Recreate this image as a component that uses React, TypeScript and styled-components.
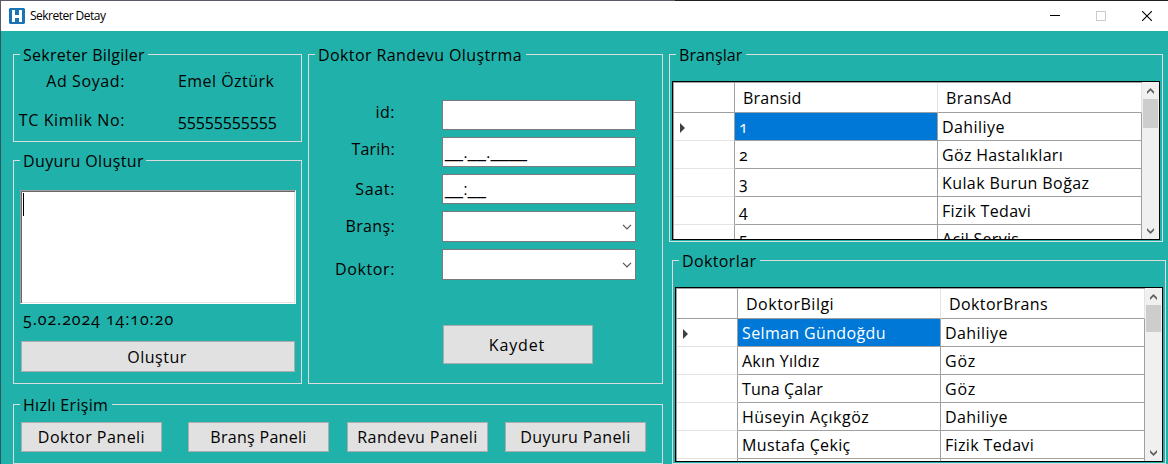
import React from 'react';
import styled, { createGlobalStyle } from 'styled-components';

const TEAL = '#20b2aa';

const GlobalStyle = createGlobalStyle`
  * { box-sizing: border-box; }
  body { margin: 0; background: ${TEAL}; overflow: hidden; }
`;

const Window = styled.div`
  width: 1168px;
  height: 464px;
  overflow: hidden;
  display: flex;
  flex-direction: column;
  background: linear-gradient(90deg, #5a5b64 675px, #221f22 675px);
  font: 16px/20px 'Open Sans', 'Noto Sans', sans-serif;
  font-variant-numeric: oldstyle-nums;
  color: #000;
`;

const TitleBar = styled.header`
  height: 30px;
  margin: 1px 0 0 1px;
  display: flex;
  align-items: center;
  background: #fff;
  padding-left: 8px;
  flex: none;
`;

const Title = styled.h1`
  margin: 0 auto 0 5px;
  font-size: 12px;
  font-weight: 400;
  line-height: 16px;
  letter-spacing: -0.52px;
`;

const WindowControls = styled.div`
  display: flex;
  margin-right: -2px;
`;

const WindowControl = styled.span`
  width: 46px;
  height: 30px;
  display: flex;
  align-items: center;
  justify-content: center;

  svg { display: block; }
`;

const Form = styled.main`
  flex: 1;
  display: flex;
  align-items: flex-start;
  gap: 6px;
  background: ${TEAL};
  border-left: 1px solid #2a5b5c;
  padding: 23px 0 0 12px;
`;

const LeftPane = styled.div`
  width: 650px;
  display: flex;
  flex-direction: column;
  gap: 20px;
`;

const TopRow = styled.div`
  display: flex;
  gap: 6px;
`;

const Stack = styled.div<{ $gap: number }>`
  display: flex;
  flex-direction: column;
  gap: ${p => p.$gap}px;
`;

const GroupFrame = styled.section<{ $w: number; $h: number; $indent?: number }>`
  width: ${p => p.$w}px;
  height: ${p => p.$h}px;
  margin-left: ${p => p.$indent ?? 0}px;
  border: 1px solid #dcdcdc;
  flex: none;
`;

const Legend = styled.h2<{ $w: number; $track: number }>`
  width: ${p => p.$w}px;
  height: 20px;
  margin: -10px 0 0 6px;
  padding-left: 3px;
  background: ${TEAL};
  font-size: 16px;
  font-weight: 400;
  white-space: nowrap;
  letter-spacing: ${p => p.$track}px;
`;

const Text = styled.span<{ $track?: number }>`
  letter-spacing: ${p => p.$track ?? 0.45}px;
  white-space: nowrap;
`;

const InfoGrid = styled.div`
  display: grid;
  grid-template-columns: 111px auto;
  column-gap: 53px;
  padding-top: 6px;
  row-gap: 19px;
`;

const InfoLabel = styled(Text)`
  justify-self: end;
`;

const NoticeBody = styled.div`
  padding: 19px 6px 0;
`;

const NoticeInput = styled.div`
  width: 276px;
  height: 114px;
  background: #fff;
  border: 1px solid;
  border-color: #a0a0a0 #fff #fff #a0a0a0;
  box-shadow: inset 1px 1px #696969, inset -1px -1px #e3e3e3;
  padding: 2px;
`;

const Caret = styled.div`
  width: 1px;
  height: 23px;
  background: #000;
`;

const Timestamp = styled.div`
  margin: 5px 0 12px 3px;
`;

const Button = styled.button<{ $w: number; $h: number; $track?: number }>`
  display: flex;
  align-items: center;
  justify-content: center;
  width: ${p => p.$w}px;
  height: ${p => p.$h}px;
  padding: 0;
  flex: none;
  border: 1px solid #adadad;
  border-radius: 0;
  background: #e1e1e1;
  color: #000;
  font: inherit;
  letter-spacing: ${p => p.$track ?? 0.45}px;
`;

const NoticeButton = styled(Button)`
  margin-left: 1px;
  padding-right: 2px;
`;

const FormRows = styled.div`
  display: flex;
  flex-direction: column;
  gap: 7px;
  padding-top: 35px;
`;

const FormRow = styled.div`
  display: flex;
  align-items: flex-start;
`;

const FieldLabel = styled.label<{ $drop: number; $track: number }>`
  width: 86px;
  margin: ${p => p.$drop}px 47px 0 0;
  text-align: right;
  letter-spacing: ${p => p.$track}px;
`;

const Field = styled.div<{ $h: number }>`
  width: 194px;
  height: ${p => p.$h}px;
  background: #fff;
  border: 1px solid #7a7a7a;
  display: flex;
  align-items: center;
  padding: 2px 3px 0 2px;
  font-family: 'Liberation Sans', sans-serif;
  letter-spacing: 0.2px;
`;

const ComboArrow = styled.svg`
  margin: 0 0 2px auto;
`;

const SaveButton = styled(Button)`
  margin: 45px 0 0 134px;
  padding-right: 2px;
`;

const QuickRow = styled.div`
  display: flex;
  padding: 7px 0 0 7px;
`;

const QuickButton = styled(Button)<{ $after: number }>`
  margin-right: ${p => p.$after}px;
`;

const GridFrame = styled.div<{ $h: number }>`
  width: 488px;
  height: ${p => p.$h}px;
  margin: 16px 0 0 2px;
  border: 1px solid #000;
  display: flex;
  background: #fff;
  overflow: hidden;
`;

const Sheet = styled.div`
  flex: 1;
  border-top: 1px solid #a0a0a0;
  border-left: 1px solid #a0a0a0;
  overflow: hidden;
`;

const SheetRow = styled.div<{ $head?: boolean }>`
  display: grid;
  grid-template-columns: 61px 203px 204px;
  height: ${p => (p.$head ? 30 : 28)}px;
`;

const RowHead = styled.div<{ $head?: boolean }>`
  display: flex;
  align-items: center;
  padding: 2px 0 0 6px;
  border-right: 1px solid #a0a0a0;
  border-bottom: 1px solid ${p => (p.$head ? '#a0a0a0' : '#e3e3e3')};
`;

const ColumnHead = styled.div<{ $track: number }>`
  display: flex;
  align-items: center;
  padding-left: 8px;
  border-right: 1px solid #e3e3e3;
  border-bottom: 1px solid #a0a0a0;
  letter-spacing: ${p => p.$track}px;
`;

const Cell = styled.div<{ $selected?: boolean; $track?: number }>`
  display: flex;
  align-items: center;
  padding-left: 4px;
  border-right: 1px solid #a0a0a0;
  border-bottom: 1px solid #a0a0a0;
  background: ${p => (p.$selected ? '#0078d7' : '#fff')};
  color: ${p => (p.$selected ? '#fff' : '#000')};
  white-space: nowrap;
  letter-spacing: ${p => p.$track ?? 0.42}px;
`;

const ScrollTrack = styled.div`
  width: 17px;
  display: flex;
  flex-direction: column;
  align-items: center;
  background: #f0f0f0;
`;

const ScrollArrow = styled.span<{ $push?: boolean }>`
  height: 17px;
  display: flex;
  align-items: center;
  margin-top: ${p => (p.$push ? 'auto' : 0)};
`;

const ScrollThumb = styled.div<{ $h: number }>`
  width: 15px;
  height: ${p => p.$h}px;
  background: #cdcdcd;
`;

type Entry = { text: string; track?: number };

const branches: [Entry, Entry][] = [
  [{ text: '1' }, { text: 'Dahiliye' }],
  [{ text: '2' }, { text: 'Göz Hastalıkları', track: 0.33 }],
  [{ text: '3' }, { text: 'Kulak Burun Boğaz', track: 0.4 }],
  [{ text: '4' }, { text: 'Fizik Tedavi', track: 0.35 }],
  [{ text: '5' }, { text: 'Acil Servis', track: 0.3 }],
];

const doctors: [Entry, Entry][] = [
  [{ text: 'Selman Gündoğdu', track: 0.36 }, { text: 'Dahiliye' }],
  [{ text: 'Akın Yıldız', track: 0.25 }, { text: 'Göz', track: 0.8 }],
  [{ text: 'Tuna Çalar', track: 0.1 }, { text: 'Göz', track: 0.8 }],
  [{ text: 'Hüseyin Açıkgöz', track: 0.46 }, { text: 'Dahiliye' }],
  [{ text: 'Mustafa Çekiç', track: 0.35 }, { text: 'Fizik Tedavi', track: 0.35 }],
  [{ text: '' }, { text: '' }],
];

const fields = [
  { label: 'id:', drop: 2, track: 0.5, height: 30, value: '' },
  { label: 'Tarih:', drop: 2, track: 0.2, height: 30, value: '__.__.____' },
  { label: 'Saat:', drop: 5, track: 0.65, height: 30, value: '__:__' },
  { label: 'Branş:', drop: 5, track: 0.35, height: 31, combo: true },
  { label: 'Doktor:', drop: 10, track: 0.6, height: 31, combo: true },
];

const quickLinks = [
  { text: 'Doktor Paneli', track: 0.48, after: 26 },
  { text: 'Branş Paneli', track: 0.3, after: 18 },
  { text: 'Randevu Paneli', track: 0.4, after: 17 },
  { text: 'Duyuru Paneli', track: 0.4, after: 0 },
];

function AppIcon() {
  return (
    <svg width="16" height="16" viewBox="0 0 16 16">
      <rect width="16" height="16" fill="#8fc0e0" />
      <path d="M1 0h14v1h1v14h-1v1H1v-1H0V1h1z" fill="#1a73b4" />
      <path d="M3 2h3v5h4V2h3v12h-3V10H6v4H3z" fill="#fff" />
    </svg>
  );
}

function GroupBox(props: {
  title: string; track: number; gap: number; w: number; h: number; indent?: number; children: React.ReactNode;
}) {
  return (
    <GroupFrame $w={props.w} $h={props.h} $indent={props.indent}>
      <Legend $w={props.gap} $track={props.track}>{props.title}</Legend>
      {props.children}
    </GroupFrame>
  );
}

function DataGrid(props: { height: number; thumb: number; columns: Entry[]; rows: [Entry, Entry][] }) {
  return (
    <GridFrame $h={props.height}>
      <Sheet>
        <SheetRow $head>
          <RowHead $head />
          {props.columns.map(c => (
            <ColumnHead key={c.text} $track={c.track ?? 0.45}>{c.text}</ColumnHead>
          ))}
        </SheetRow>
        {props.rows.map((row, r) => (
          <SheetRow key={r}>
            <RowHead>
              {r === 0 && (
                <svg width="5" height="10" viewBox="0 0 5 10"><path d="M0 0l5 5-5 5z" fill="#404040" /></svg>
              )}
            </RowHead>
            {row.map((cell, c) => (
              <Cell key={c} $selected={r === 0 && c === 0} $track={cell.track}>{cell.text}</Cell>
            ))}
          </SheetRow>
        ))}
      </Sheet>
      <ScrollTrack>
        <ScrollArrow>
          <svg width="7" height="6" viewBox="0 0 7 6"><path d="M0 3.500L3.500 0 7 3.500V6L3.500 2.600 0 6z" fill="#606060" /></svg>
        </ScrollArrow>
        <ScrollThumb $h={props.thumb} />
        <ScrollArrow $push>
          <svg width="7" height="6" viewBox="0 0 7 6"><path d="M0 2.500L3.500 6 7 2.500V0L3.500 3.400 0 0z" fill="#606060" /></svg>
        </ScrollArrow>
      </ScrollTrack>
    </GridFrame>
  );
}

export default function App() {
  return (
    <Window>
      <GlobalStyle />
      <TitleBar>
        <AppIcon />
        <Title>Sekreter Detay</Title>
        <WindowControls>
          <WindowControl>
            <svg width="10" height="10"><path d="M0 4.500h10" stroke="#000" /></svg>
          </WindowControl>
          <WindowControl>
            <svg width="10" height="10"><rect x=".5" y=".5" width="9" height="9" fill="none" stroke="#ccc" /></svg>
          </WindowControl>
          <WindowControl>
            <svg width="10" height="10"><path d="M0 0l10 10M10 0L0 10" stroke="#000" strokeWidth="1.1" /></svg>
          </WindowControl>
        </WindowControls>
      </TitleBar>
      <Form>
        <LeftPane>
          <TopRow>
            <Stack $gap={18}>
              <GroupBox title="Sekreter Bilgiler" track={0.24} gap={128} w={289} h={88}>
                <InfoGrid>
                  <InfoLabel $track={0.6}>Ad Soyad:</InfoLabel>
                  <Text $track={0.45}>Emel Öztürk</Text>
                  <InfoLabel $track={0.62}>TC Kimlik No:</InfoLabel>
                  <Text $track={0.28}>55555555555</Text>
                </InfoGrid>
              </GroupBox>
              <GroupBox title="Duyuru Oluştur" track={0.36} gap={126} w={289} h={224}>
                <NoticeBody>
                  <NoticeInput><Caret /></NoticeInput>
                  <Timestamp><Text $track={0.93}>5.02.2024 14:10:20</Text></Timestamp>
                  <NoticeButton $w={274} $h={31} $track={0.5}>Oluştur</NoticeButton>
                </NoticeBody>
              </GroupBox>
            </Stack>
            <GroupBox title="Doktor Randevu Oluştrma" track={0.4} gap={211} w={355} h={330}>
              <FormRows>
                {fields.map(f => (
                  <FormRow key={f.label}>
                    <FieldLabel $drop={f.drop} $track={f.track}>{f.label}</FieldLabel>
                    <Field $h={f.height}>
                      {f.value}
                      {f.combo && (
                        <ComboArrow width="10" height="6" viewBox="0 0 10 6">
                          <path d="M1 .8l4 4 4-4" fill="none" stroke="#555" strokeWidth="1.2" />
                        </ComboArrow>
                      )}
                    </Field>
                  </FormRow>
                ))}
              </FormRows>
              <SaveButton $w={150} $h={39} $track={0.85}>Kaydet</SaveButton>
            </GroupBox>
          </TopRow>
          <GroupBox title="Hızlı Erişim" track={0.3} gap={92} w={650} h={60}>
            <QuickRow>
              {quickLinks.map(q => (
                <QuickButton key={q.text} $w={141} $h={30} $track={q.track} $after={q.after}>{q.text}</QuickButton>
              ))}
            </QuickRow>
          </GroupBox>
        </LeftPane>
        <Stack $gap={18}>
          <GroupBox title="Branşlar" track={0.1} gap={70} w={494} h={188}>
            <DataGrid
              height={159}
              thumb={29}
              columns={[{ text: 'Bransid', track: 0.22 }, { text: 'BransAd', track: 0.4 }]}
              rows={branches}
            />
          </GroupBox>
          <GroupBox title="Doktorlar" track={0.38} gap={81} w={494} h={204} indent={3}>
            <DataGrid
              height={175}
              thumb={27}
              columns={[{ text: 'DoktorBilgi', track: 0.5 }, { text: 'DoktorBrans', track: 0.4 }]}
              rows={doctors}
            />
          </GroupBox>
        </Stack>
      </Form>
    </Window>
  );
}
